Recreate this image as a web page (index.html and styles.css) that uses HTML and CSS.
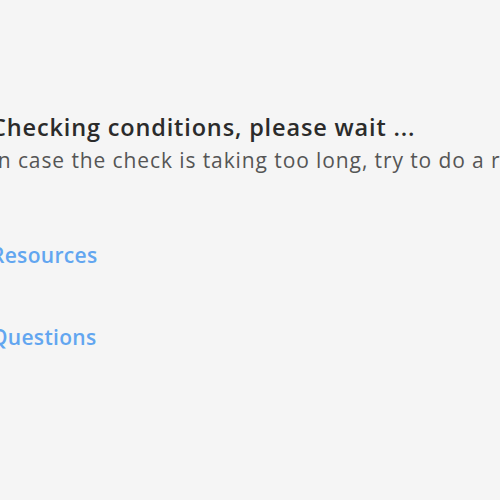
FILE: index.html
```html
<!DOCTYPE html>
<html>
<head>
<meta charset="utf-8">
<link rel="stylesheet" href="styles.css">
</head>
<body>
<main class="page">
  <section class="status">
    <h1 class="title">Checking conditions, please wait ...</h1>
    <p class="hint">In case the check is taking too long, try to do a refresh of the page.</p>
  </section>
  <nav class="links">
    <a class="link" href="#">Resources</a>
    <a class="link" href="#">Questions</a>
  </nav>
</main>
</body>
</html>
```
FILE: styles.css
```css
html, body {
  margin: 0;
  padding: 0;
  background: #f5f5f5;
  overflow: hidden;
}
body {
  font-family: "Open Sans", "Noto Sans", sans-serif;
  width: 500px;
  height: 500px;
}
.page {
  display: flex;
  flex-direction: column;
  margin-left: -9px;
  padding-top: 111px;
  white-space: nowrap;
}
.status {
  display: flex;
  flex-direction: column;
}
.title {
  margin: 0;
  font-size: 23.5px;
  font-weight: 600;
  letter-spacing: 0.85px;
  color: #2b2b2b;
  line-height: 32px;
}
.hint {
  margin: 3px 0 0;
  font-size: 21px;
  letter-spacing: 0.9px;
  color: #555;
  line-height: 28px;
}
.links {
  display: flex;
  flex-direction: column;
  gap: 56px;
  margin-top: 68px;
}
.link {
  font-size: 21px;
  font-weight: 600;
  letter-spacing: 0.3px;
  color: #62a6f0;
  text-decoration: none;
  line-height: 26px;
}
```
